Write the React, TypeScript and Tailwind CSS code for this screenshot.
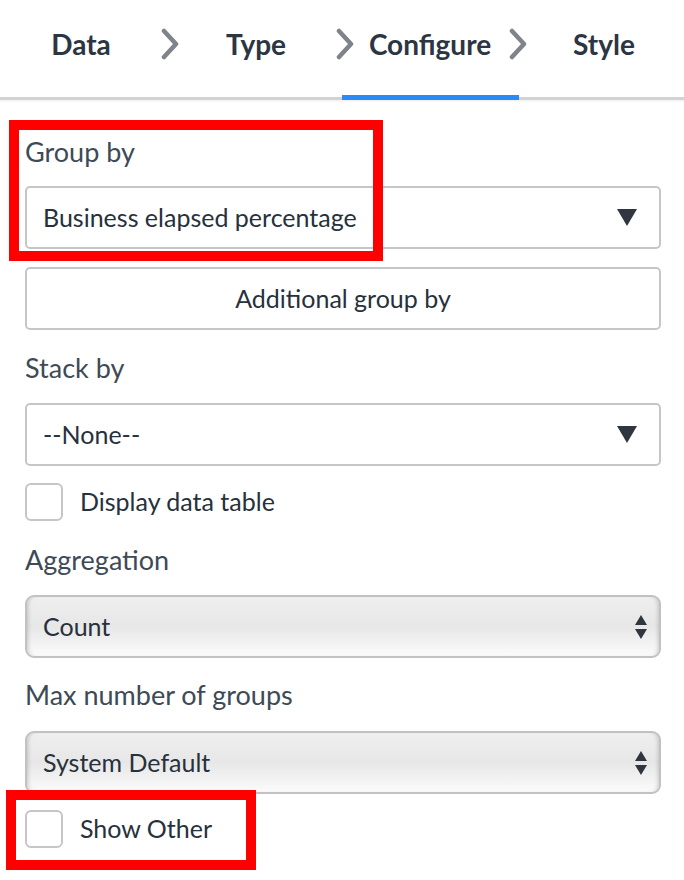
import React from "react";

const font = "font-['Lato','Noto_Sans',sans-serif]";

function Chevron() {
  return (
    <svg width="20" height="32" viewBox="0 0 20 32" className="shrink-0">
      <path
        d="M4 3 L16 16 L4 29"
        fill="none"
        stroke="#7f848a"
        strokeWidth="4.5"
        strokeLinecap="round"
        strokeLinejoin="round"
      />
    </svg>
  );
}

function Label({ children, className = "" }: { children: React.ReactNode; className?: string }) {
  return (
    <div className={`h-[36px] text-[27px] leading-[36px] text-[#3e4a56] ${className}`}>{children}</div>
  );
}

function Select({ value, className = "" }: { value: string; className?: string }) {
  return (
    <div
      className={`flex h-[63px] items-center justify-between rounded-[5px] border-2 border-[#c6c6ca] bg-white pl-[16px] pr-[22px] ${className}`}
    >
      <span className="text-[25px] text-[#27313c]">{value}</span>
      <svg width="20" height="17" viewBox="0 0 20 17">
        <path d="M0 0 H20 L10 17 Z" fill="#2f3640" />
      </svg>
    </div>
  );
}

function NativeSelect({ value, className = "" }: { value: string; className?: string }) {
  return (
    <div
      className={`flex h-[63px] items-center justify-between rounded-[9px] border-2 border-[#c2c2c5] bg-gradient-to-b from-[#efefef] via-[#e7e7e7] to-[#fbfbfb] pl-[16px] pr-[12px] shadow-[inset_4px_0_4px_-3px_rgba(0,0,0,0.18),inset_-4px_0_4px_-3px_rgba(0,0,0,0.18)] ${className}`}
    >
      <span className="text-[25px] text-[#27313c]">{value}</span>
      <svg width="12" height="24" viewBox="0 0 12 24">
        <path d="M6 0 L12 10 H0 Z" fill="#2f3640" />
        <path d="M0 14 H12 L6 24 Z" fill="#2f3640" />
      </svg>
    </div>
  );
}

function Checkbox({ label, className = "" }: { label: string; className?: string }) {
  return (
    <div className={`flex items-center ${className}`}>
      <div className="h-[38px] w-[38px] rounded-[6px] border-2 border-[#c6c6ca] bg-white" />
      <span className="ml-[17px] text-[25px] text-[#27313c]">{label}</span>
    </div>
  );
}

function Tab({ label, w }: { label: string; w: string }) {
  return <div className={`flex justify-center whitespace-nowrap ${w}`}>{label}</div>;
}

function Sep({ w }: { w: string }) {
  return (
    <div className={`flex justify-center ${w}`}>
      <Chevron />
    </div>
  );
}

export default function App() {
  return (
    <div className={`relative h-[880px] w-[684px] overflow-hidden bg-white ${font}`}>
      <div className="relative flex h-[100px] items-center border-b-[3px] border-[#d2d2d4] pb-[10px] pl-[22px] text-[28px] font-bold text-[#2c3642] shadow-[0_1px_2px_rgba(0,0,0,0.08)]">
        <Tab label="Data" w="w-[118px]" />
        <Sep w="w-[60px]" />
        <Tab label="Type" w="w-[112px]" />
        <Sep w="w-[66px]" />
        <Tab label="Configure" w="w-[104px]" />
        <Sep w="w-[72px]" />
        <Tab label="Style" w="w-[100px]" />
        <div className="absolute bottom-[-3px] left-[342px] h-[5px] w-[177px] bg-[#2a8bf7]" />
      </div>

      <div className="pl-[25px] pr-[23px]">
        <Label className="mt-[34px]">Group by</Label>
        <Select value="Business elapsed percentage" className="mt-[16px]" />
        <div className="mt-[18px] flex h-[63px] items-center justify-center rounded-[5px] border-2 border-[#c6c6ca] bg-white text-[25px] text-[#27313c]">
          Additional group by
        </div>

        <Label className="mt-[20px]">Stack by</Label>
        <Select value="--None--" className="mt-[17px]" />
        <Checkbox label="Display data table" className="mt-[17px]" />

        <Label className="mt-[21px]">Aggregation</Label>
        <NativeSelect value="Count" className="mt-[17px]" />

        <Label className="mt-[19px]">Max number of groups</Label>
        <NativeSelect value="System Default" className="mt-[18px]" />
        <Checkbox label="Show Other" className="mt-[16px]" />
      </div>

      <div className="absolute left-[9px] top-[120px] h-[141px] w-[374px] border-[10px] border-[#ff0000]" />
      <div className="absolute left-[6px] top-[790px] h-[80px] w-[250px] border-[10px] border-[#ff0000]" />
    </div>
  );
}
